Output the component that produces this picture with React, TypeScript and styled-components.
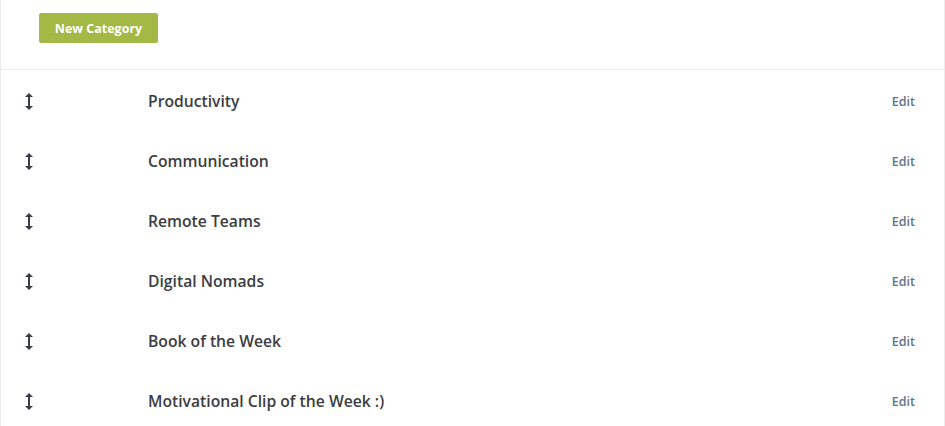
import { createGlobalStyle } from 'styled-components'
import styled from 'styled-components'

const GlobalStyle = createGlobalStyle`
  body {
    margin: 0;
    background: #fff;
    font-family: 'Open Sans', 'Liberation Sans', sans-serif;
  }
`

const Panel = styled.div`
  width: 945px;
  box-sizing: border-box;
  border-left: 1px solid #ececec;
  border-right: 1px solid #ececec;
  min-height: 426px;
`

const Header = styled.div`
  height: 70px;
  box-sizing: border-box;
  padding: 13px 0 0 38px;
  border-bottom: 1px solid #ececec;
`

const NewButton = styled.button`
  height: 30px;
  width: 119px;
  border: 0;
  border-radius: 2px;
  background: #a4b945;
  color: #fff;
  font-family: 'Open Sans', 'Liberation Sans', sans-serif;
  font-weight: 700;
  font-size: 12.5px;
  cursor: pointer;
  padding: 0;
`

const List = styled.ul`
  list-style: none;
  margin: 0;
  padding: 0;
`

const Row = styled.li`
  height: 60px;
  display: grid;
  grid-template-columns: 147px 1fr auto;
  align-items: center;
  padding: 2px 29px 0 0;
  box-sizing: border-box;
`

const Handle = styled.span`
  display: flex;
  padding-left: 24px;
  color: #3a3d44;
`

const Name = styled.span`
  font-size: 15.7px;
  font-weight: 600;
  color: #3b3d42;
`

const EditLink = styled.a`
  font-size: 12.5px;
  font-weight: 600;
  color: #627386;
  cursor: pointer;
`

const categories = [
  'Productivity',
  'Communication',
  'Remote Teams',
  'Digital Nomads',
  'Book of the Week',
  'Motivational Clip of the Week :)',
]

function SortIcon() {
  return (
    <svg width="8" height="17" viewBox="0 0 8 17" fill="currentColor">
      <path d="M4 0 L8 4 L5 4 L5 13 L8 13 L4 17 L0 13 L3 13 L3 4 L0 4 Z" />
    </svg>
  )
}

export default function App() {
  return (
    <>
      <GlobalStyle />
      <Panel>
        <Header>
          <NewButton>New Category</NewButton>
        </Header>
        <List>
          {categories.map((c) => (
            <Row key={c}>
              <Handle>
                <SortIcon />
              </Handle>
              <Name>{c}</Name>
              <EditLink>Edit</EditLink>
            </Row>
          ))}
        </List>
      </Panel>
    </>
  )
}
